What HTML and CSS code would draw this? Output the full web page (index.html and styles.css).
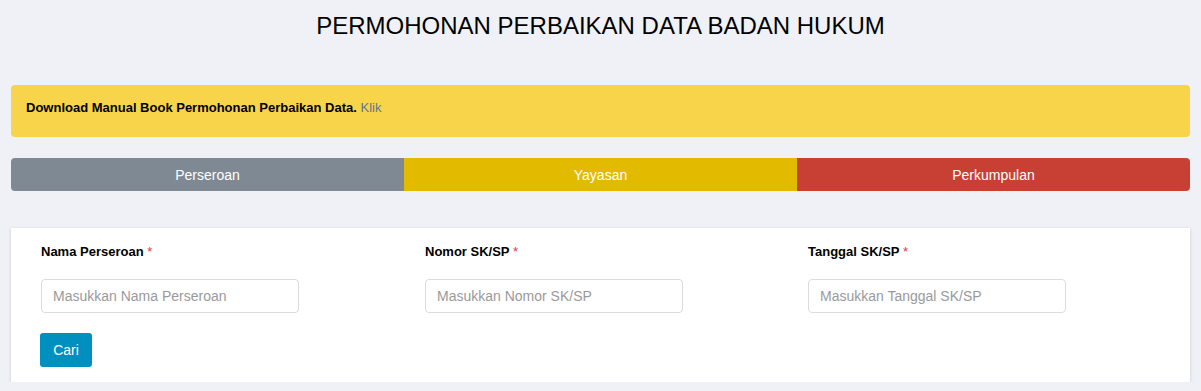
FILE: index.html
```html
<!DOCTYPE html>
<html lang="id">
<head>
<meta charset="utf-8">
<title>Permohonan Perbaikan Data Badan Hukum</title>
<link rel="stylesheet" href="styles.css">
</head>
<body>
<div class="page">
  <h1 class="title">PERMOHONAN PERBAIKAN DATA BADAN HUKUM</h1>
  <div class="alert"><b>Download Manual Book Permohonan Perbaikan Data.</b> <a class="alert-link" href="#">Klik</a></div>
  <div class="tabs">
    <div class="tab tab-gray">Perseroan</div>
    <div class="tab tab-yellow">Yayasan</div>
    <div class="tab tab-red">Perkumpulan</div>
  </div>
  <div class="card">
    <div class="row">
      <div class="col">
        <label class="label">Nama Perseroan <span class="req">*</span></label>
        <input class="input" type="text" placeholder="Masukkan Nama Perseroan">
      </div>
      <div class="col">
        <label class="label">Nomor SK/SP <span class="req">*</span></label>
        <input class="input" type="text" placeholder="Masukkan Nomor SK/SP">
      </div>
      <div class="col">
        <label class="label">Tanggal SK/SP <span class="req">*</span></label>
        <input class="input" type="text" placeholder="Masukkan Tanggal SK/SP">
      </div>
    </div>
    <button class="btn" type="button">Cari</button>
  </div>
</div>
</body>
</html>
```
FILE: styles.css
```css
html, body {
  margin: 0;
  padding: 0;
  background: #f0f1f6;
  font-family: "Liberation Sans", Arial, sans-serif;
  color: #000;
}
.page {
  padding: 0 11px 0 11px;
}
.title {
  margin: 0;
  padding-top: 12px;
  height: 85px;
  box-sizing: border-box;
  text-align: center;
  font-weight: normal;
  font-size: 24px;
  line-height: 28px;
}
.alert {
  background: #f8d44a;
  border-radius: 4px;
  height: 52px;
  box-sizing: border-box;
  padding: 15px 15px;
  font-size: 13px;
  line-height: 16px;
  color: #000;
}
.alert-link {
  color: #64758a;
  text-decoration: none;
}
.tabs {
  margin-top: 21px;
  display: flex;
  height: 33px;
  border-radius: 4px;
  overflow: hidden;
}
.tab {
  flex: 1;
  display: flex;
  align-items: center;
  justify-content: center;
  color: #fff;
  font-size: 14px;
}
.tab-gray { background: #7e8993; }
.tab-yellow { background: #e2ba00; }
.tab-red { background: #c83f34; }
.card {
  margin-top: 37px;
  background: #fff;
  box-shadow: 0 1px 3px rgba(0,0,0,0.18);
  padding: 16px 0 15px 30px;
  height: 154px;
  box-sizing: border-box;
}
.row {
  display: grid;
  grid-template-columns: 384px 383px 383px;
}
.col {
  display: flex;
  flex-direction: column;
  align-items: flex-start;
}
.label {
  font-size: 13px;
  font-weight: bold;
  line-height: 16px;
  margin-bottom: 19px;
}
.req {
  color: #e53935;
  font-weight: normal;
}
.input {
  width: 258px;
  height: 34px;
  box-sizing: border-box;
  border: 1px solid #dcdcdc;
  border-radius: 4px;
  padding: 0 11px;
  font-family: "Liberation Sans", Arial, sans-serif;
  font-size: 14px;
  color: #333;
  background: #fff;
}
.input::placeholder {
  color: #9a9a9a;
}
.btn {
  margin-top: 20px;
  width: 52px;
  height: 34px;
  background: #0090bf;
  color: #fff;
  border: none;
  border-radius: 3px;
  font-family: "Liberation Sans", Arial, sans-serif;
  font-size: 14px;
  padding: 0;
  margin-left: -1px;
}
```
